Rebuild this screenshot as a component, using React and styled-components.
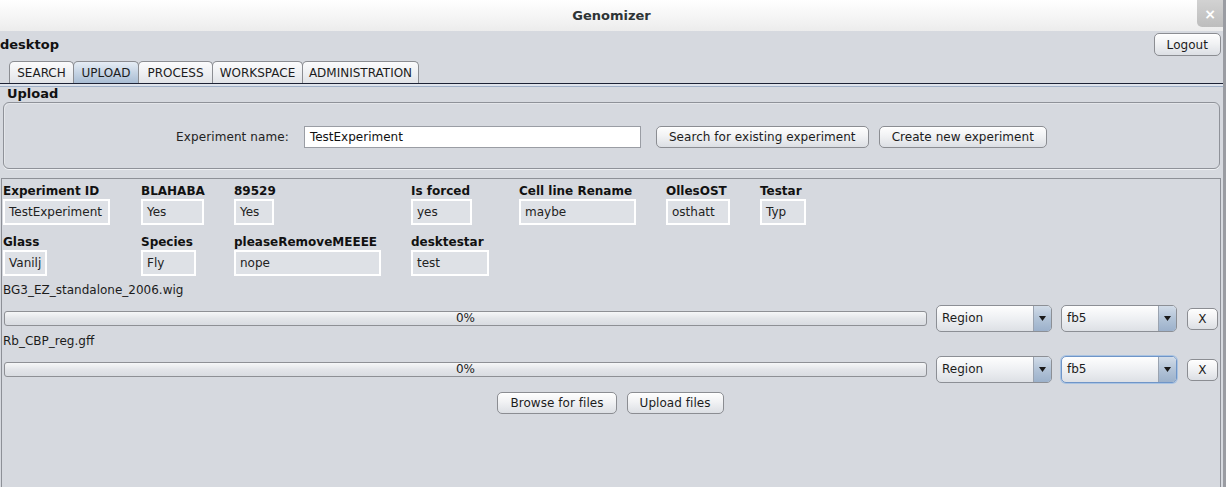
import React from "react";
import styled, { createGlobalStyle } from "styled-components";

const GlobalStyle = createGlobalStyle`
  html, body {
    margin: 0;
    padding: 0;
    background: #d6d9df;
  }
  body {
    font-family: "DejaVu Sans", "Liberation Sans", sans-serif;
    font-size: 12px;
    color: #1c1c1c;
  }
  #root {
    width: 1226px;
    height: 487px;
    overflow: hidden;
  }
`;

const Window = styled.div`
  width: 1226px;
  height: 487px;
  box-sizing: border-box;
  display: flex;
  flex-direction: column;
  background: #d6d9df;
  border-right: 3px solid #9a9ca2;
`;

const TitleBar = styled.div`
  height: 31px;
  flex: none;
  display: grid;
  grid-template-columns: 1fr auto 1fr;
  align-items: start;
  background: linear-gradient(#ffffff, #f4f4f4 60%, #ececec);
`;

const Title = styled.div`
  grid-column: 2;
  line-height: 31px;
  font-weight: bold;
  font-size: 13px;
  color: #2e3436;
`;

const CloseButton = styled.div`
  grid-column: 3;
  justify-self: end;
  width: 26px;
  height: 27px;
  display: flex;
  align-items: center;
  justify-content: center;
  border-radius: 0 0 0 5px;
  background: linear-gradient(#d2d2d2, #bdbdbd);
  color: #fff;
  font-weight: bold;
  font-size: 14px;
`;

const Header = styled.div`
  display: flex;
  justify-content: space-between;
  align-items: flex-start;
  padding: 2px 2px 0 0;
  height: 28px;
  flex: none;
`;

const UserName = styled.div`
  margin-top: 4px;
  font-weight: bold;
  font-size: 13px;
  line-height: 16px;
  color: #111;
`;

const Button = styled.button`
  height: ${(p) => p.$h || 22}px;
  min-width: ${(p) => p.$w || 0}px;
  padding: 0 ${(p) => (p.$w ? 0 : 12)}px;
  font-family: inherit;
  font-size: 12px;
  letter-spacing: 0.05px;
  color: #1c1c1c;
  border: 1px solid #8b8d92;
  border-radius: 5px;
  background: linear-gradient(#fefefe, #f1f2f4 45%, #dcdfe4);
  box-shadow: inset 0 1px 0 #ffffff;
  cursor: default;
`;

const TabStrip = styled.div`
  display: flex;
  padding-left: 9px;
  height: 22px;
  flex: none;
`;

const Tab = styled.div`
  width: ${(p) => p.$w}px;
  height: 22px;
  box-sizing: border-box;
  margin-right: -1px;
  text-align: center;
  line-height: 22px;
  font-size: 12px;
  color: #1c1c1c;
  border: 1px solid #8b8d92;
  border-bottom: none;
  border-radius: 5px 5px 0 0;
  background: ${(p) =>
    p.$active
      ? "linear-gradient(#e6edf5, #c6d4e4 50%, #a9bdd4)"
      : "linear-gradient(#fbfbfc, #eceef1 60%, #e1e3e7)"};
`;

const TabRule = styled.div`
  height: 4px;
  flex: none;
  box-sizing: border-box;
  border-top: 1px solid #1d2235;
  border-bottom: 1px solid #9fb0c8;
  background: #dfe4ec;
`;

const SectionTitle = styled.div`
  padding-left: 7px;
  font-weight: bold;
  font-size: 13px;
  line-height: 14px;
  color: #111;
  margin-bottom: 1px;
`;

const NamePanel = styled.div`
  margin: 0 3px;
  height: 67px;
  flex: none;
  box-sizing: border-box;
  padding-top: 3px;
  display: flex;
  align-items: center;
  justify-content: center;
  gap: 10px;
  border: 1px solid #8f9299;
  border-radius: 6px;
  box-shadow: inset 1px 1px 0 #e4e6ea, 0 1px 0 #eef0f3;
`;

const FieldLabel = styled.span`
  color: #222;
  letter-spacing: 0.1px;
  margin-right: 5px;
`;

const TextField = styled.div`
  width: 337px;
  height: 22px;
  box-sizing: border-box;
  margin-right: 5px;
  padding-left: 5px;
  line-height: 20px;
  background: #fff;
  border: 1px solid #9a9da4;
  color: #111;
`;

const FilesPanel = styled.div`
  flex: 1;
  margin: 9px 2px 0 1px;
  padding: 5px 2px 0 1px;
  border: 1px solid #8d9097;
  border-bottom: none;
  display: flex;
  flex-direction: column;
`;

const AnnotationGrid = styled.div`
  display: grid;
  grid-template-columns: 138px 93px 177px 108px 147px 94px max-content;
  row-gap: 10px;
  align-items: start;
`;

const Annotation = styled.div`
  display: flex;
  flex-direction: column;
  width: ${(p) => p.$w}px;
  grid-column: ${(p) => p.$col};
`;

const AnnotationName = styled.div`
  font-weight: bold;
  line-height: 15px;
  color: #111;
  white-space: nowrap;
`;

const AnnotationValue = styled.div`
  height: 26px;
  box-sizing: border-box;
  padding: 0 4px;
  line-height: 22px;
  border: 2px solid #ffffff;
  background: #dee1e6;
  color: #222;
  white-space: nowrap;
`;

const FileName = styled.div`
  line-height: 15px;
  margin-top: ${(p) => (p.$first ? 7 : 0)}px;
  color: #1c1c1c;
`;

const FileRow = styled.div`
  display: flex;
  align-items: center;
  height: 27px;
  margin: 7px 0 2px 1px;
`;

const Progress = styled.div`
  flex: 1;
  height: 15px;
  box-sizing: border-box;
  margin-right: 9px;
  border: 1px solid #8e9095;
  border-radius: 3px;
  background: linear-gradient(#f6f7f8, #e3e5e9 50%, #d9dce1);
  text-align: center;
  line-height: 13px;
  font-size: 12px;
  color: #222;
`;

const Combo = styled.div`
  width: 116px;
  height: 27px;
  box-sizing: border-box;
  margin-right: ${(p) => p.$gap}px;
  display: flex;
  border: 1px solid ${(p) => (p.$focus ? "#6f95c8" : "#8c8f95")};
  border-radius: 5px;
  box-shadow: ${(p) => (p.$focus ? "0 0 0 1px #a9c3e2" : "none")};
  background: linear-gradient(#fefefe, #eef0f3 50%, #dde0e5);
  overflow: hidden;
`;

const ComboText = styled.div`
  flex: 1;
  padding-left: 5px;
  line-height: 25px;
  color: #1c1c1c;
`;

const ComboArrow = styled.div`
  width: 17px;
  display: flex;
  align-items: center;
  justify-content: center;
  border-left: 1px solid #9aa3b0;
  background: linear-gradient(#d2dce8, #b2c3d7 50%, #9cb1cb);
`;

const Actions = styled.div`
  display: flex;
  justify-content: center;
  gap: 10px;
  margin-top: 7px;
`;

const tabs = [
  { label: "SEARCH", w: 65 },
  { label: "UPLOAD", w: 66, active: true },
  { label: "PROCESS", w: 75 },
  { label: "WORKSPACE", w: 91 },
  { label: "ADMINISTRATION", w: 117 },
];

const annotations = [
  { name: "Experiment ID", value: "TestExperiment", col: 1, w: 107 },
  { name: "BLAHABA", value: "Yes", col: 2, w: 63 },
  { name: "89529", value: "Yes", col: 3, w: 40 },
  { name: "Is forced", value: "yes", col: 4, w: 61 },
  { name: "Cell line Rename", value: "maybe", col: 5, w: 117 },
  { name: "OllesOST", value: "osthatt", col: 6, w: 64 },
  { name: "Testar", value: "Typ", col: 7, w: 46 },
  { name: "Glass", value: "Vanilj", col: 1, w: 44 },
  { name: "Species", value: "Fly", col: 2, w: 55 },
  { name: "pleaseRemoveMEEEE", value: "nope", col: 3, w: 147 },
  { name: "desktestar", value: "test", col: 4, w: 78 },
];

const files = [
  { name: "BG3_EZ_standalone_2006.wig", focus: false },
  { name: "Rb_CBP_reg.gff", focus: true },
];

function Arrow() {
  return (
    <svg width="7" height="5" viewBox="0 0 7 5">
      <polygon points="0,0 7,0 3.5,5" fill="#1a1a1a" />
    </svg>
  );
}

function SelectBox({ text, gap, focus }) {
  return (
    <Combo $gap={gap} $focus={focus}>
      <ComboText>{text}</ComboText>
      <ComboArrow>
        <Arrow />
      </ComboArrow>
    </Combo>
  );
}

export default function App() {
  return (
    <>
      <GlobalStyle />
      <Window>
        <TitleBar>
          <Title>Genomizer</Title>
          <CloseButton>×</CloseButton>
        </TitleBar>

        <Header>
          <UserName>desktop</UserName>
          <Button $h={23}>Logout</Button>
        </Header>

        <TabStrip>
          {tabs.map((t) => (
            <Tab key={t.label} $w={t.w} $active={t.active}>
              {t.label}
            </Tab>
          ))}
        </TabStrip>
        <TabRule />

        <SectionTitle>Upload</SectionTitle>
        <NamePanel>
          <FieldLabel>Experiment name:</FieldLabel>
          <TextField>TestExperiment</TextField>
          <Button>Search for existing experiment</Button>
          <Button>Create new experiment</Button>
        </NamePanel>

        <FilesPanel>
          <AnnotationGrid>
            {annotations.map((a) => (
              <Annotation key={a.name} $col={a.col} $w={a.w}>
                <AnnotationName>{a.name}</AnnotationName>
                <AnnotationValue>{a.value}</AnnotationValue>
              </Annotation>
            ))}
          </AnnotationGrid>

          {files.map((f, i) => (
            <React.Fragment key={f.name}>
              <FileName $first={i === 0}>{f.name}</FileName>
              <FileRow>
                <Progress>0%</Progress>
                <SelectBox text="Region" gap={9} />
                <SelectBox text="fb5" gap={10} focus={f.focus} />
                <Button $w={31}>X</Button>
              </FileRow>
            </React.Fragment>
          ))}

          <Actions>
            <Button>Browse for files</Button>
            <Button>Upload files</Button>
          </Actions>
        </FilesPanel>
      </Window>
    </>
  );
}
